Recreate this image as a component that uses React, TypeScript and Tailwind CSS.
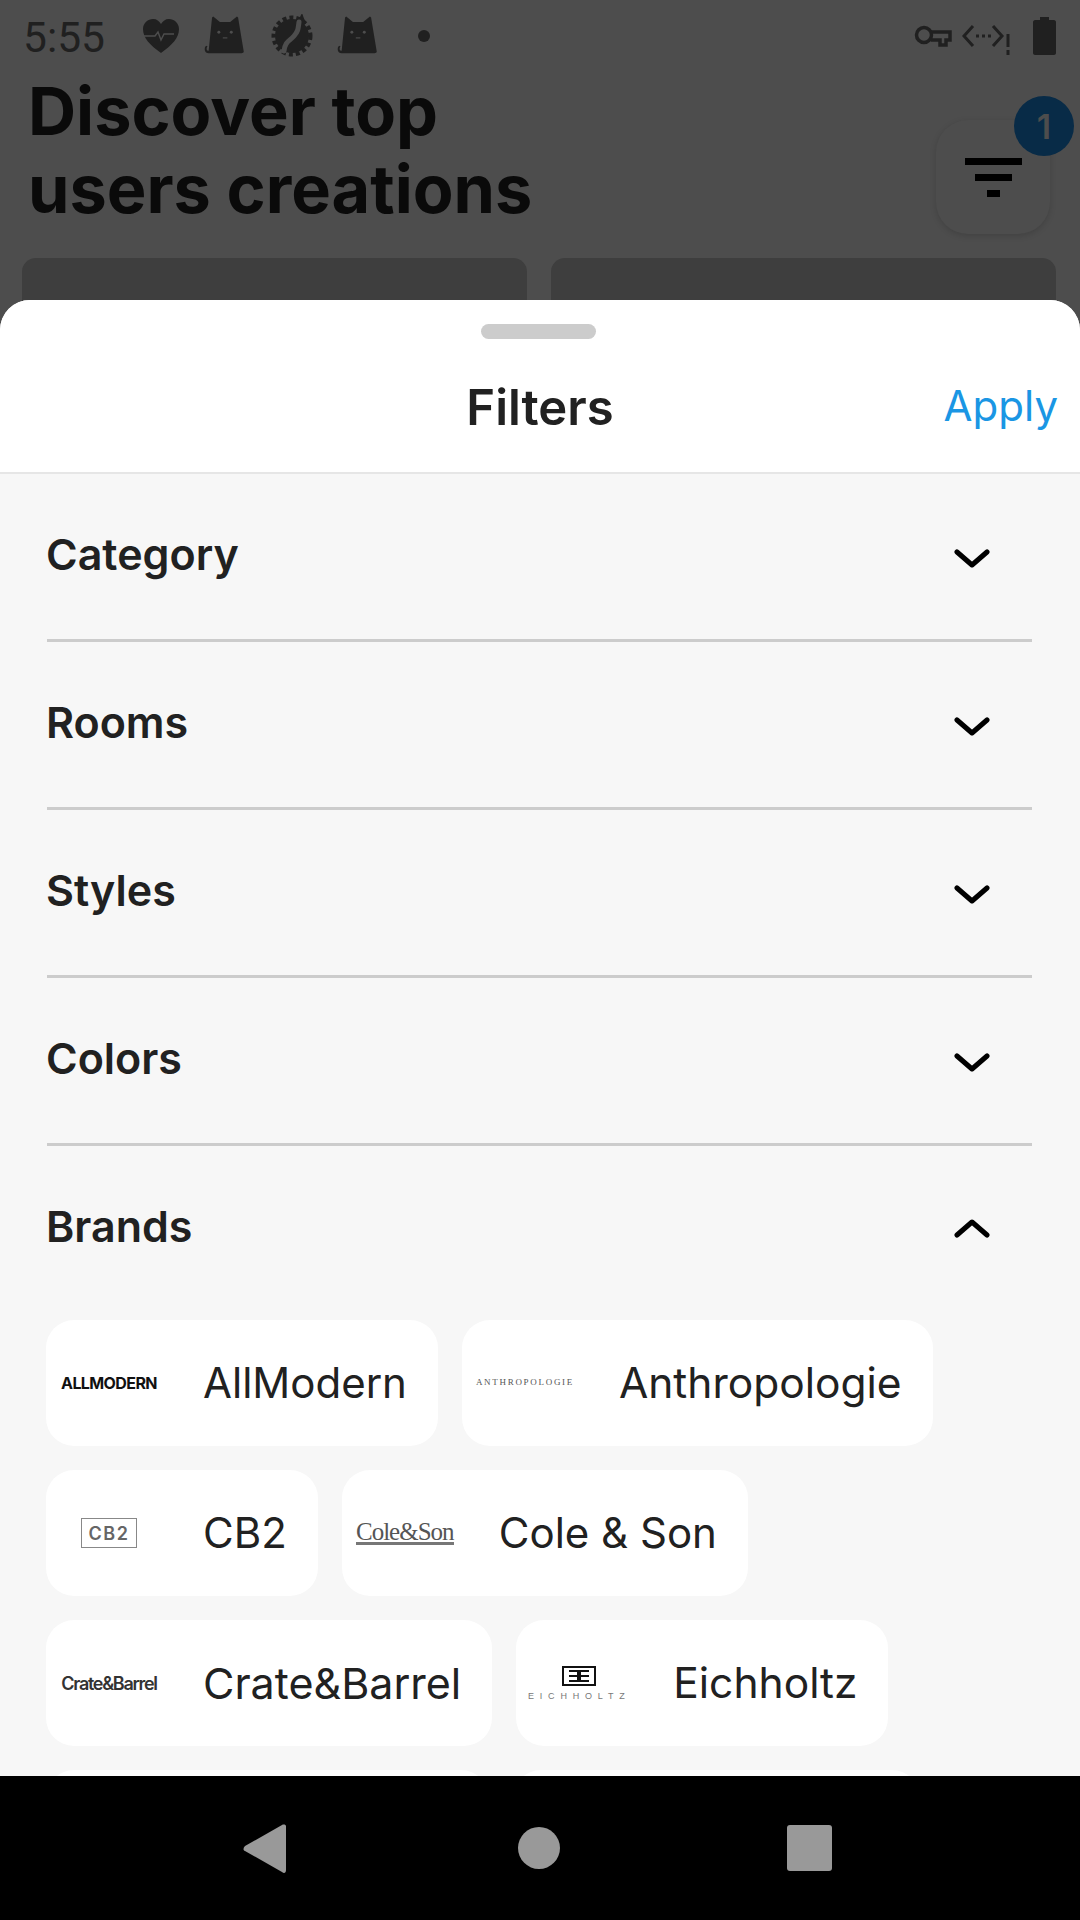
import type { ReactNode } from "react";

function Cat() {
  return (
    <svg viewBox="0 0 38 38" className="h-[43px] w-[43px] fill-[#202020]">
      <path d="M9 3l6 5h9l6-5 1 1 5 30c0 1-1 1.500-2 1.500H5c-2 0-3.500-1-3.500-3.500 0-1.500.5-2.500 1.500-3l1 .6c-.6.5-.8 1.300-.8 2.200 0 1 .7 1.600 1.800 1.600L8 4z" />
      <circle cx="14" cy="17" r="1.300" fill="#4d4d4d" />
      <circle cx="25" cy="17" r="1.300" fill="#4d4d4d" />
      <path d="M17.500 22h4" stroke="#4d4d4d" strokeWidth="1" />
    </svg>
  );
}

function Gear() {
  return (
    <svg viewBox="8 8 44 44" className="h-[44px] w-[44px]">
      <circle cx="30" cy="30" r="17" fill="#202020" />
      <circle cx="30" cy="30" r="18.500" fill="none" stroke="#202020" strokeWidth="4" strokeDasharray="4 3" />
      <path d="M35 17l5-10 4 11z" fill="#202020" />
      <path d="M22 45C23 35 28 35 32 30S36 24 37 16" fill="none" stroke="#4d4d4d" strokeWidth="5" strokeLinecap="round" />
    </svg>
  );
}

function StatusBar() {
  return (
    <div className="flex h-[72px] items-center justify-between pl-[23px] pr-[24px]">
      <div className="flex items-center">
        <span className="mt-[4px] w-[117px] font-['Roboto',sans-serif] text-[42.500px] leading-none text-[#202020]">5:55</span>
        <svg viewBox="0 0 42 36" className="h-[36px] w-[42px]">
          <path d="M21 35C10 27 3 20 3 11 3 5 8 1 13 1c4 0 6 2 8 5 2-3 4-5 8-5 5 0 10 4 10 10 0 9-7 16-18 24z" fill="#202020" />
          <path d="M0 18h15l3-4 3 8 3-6h10" fill="none" stroke="#4d4d4d" strokeWidth="1.500" />
        </svg>
        <div className="-mt-[3px] ml-[21px]"><Cat /></div>
        <div className="ml-[24px]"><Gear /></div>
        <div className="-mt-[3px] ml-[22px]"><Cat /></div>
        <div className="ml-[39px] h-[12px] w-[12px] rounded-full bg-[#202020]" />
      </div>
      <div className="flex items-center">
        <svg viewBox="0 0 38 24" className="h-[24px] w-[38px]" fill="none" stroke="#202020" strokeWidth="3.500">
          <circle cx="10" cy="11" r="7.500" />
          <path d="M17 8h19v8h-4v5h-6v-5h-9" />
        </svg>
        <svg viewBox="0 0 50 34" className="ml-[10px] mt-[8px] h-[34px] w-[50px]" fill="none" stroke="#202020" strokeWidth="3">
          <path d="M11 3L2 13l9 10M31 3l9 10-9 10" />
          <path d="M14 13h3M20 13h3M26 13h3" />
          <path d="M46 11v13M46 27v5" />
        </svg>
        <svg viewBox="0 0 23 38" className="ml-[21px] h-[38px] w-[23px] fill-[#202020]">
          <path d="M7 0h9v3h5c1 0 2 1 2 2v31c0 1-1 2-2 2H2c-1 0-2-1-2-2V5c0-1 1-2 2-2h5z" />
        </svg>
      </div>
    </div>
  );
}

function Backdrop() {
  return (
    <div className="h-[1776px] overflow-hidden bg-[#4d4d4d]">
      <StatusBar />
      <div className="relative">
        <h1 className="pl-[28px] text-[66.600px] font-bold leading-[78px] text-[#0a0a0a]">
          Discover top
          <br />
          users creations
        </h1>
        <div className="absolute right-[30px] top-[48px] flex h-[114px] w-[114px] flex-col items-center justify-center gap-[9px] rounded-[32px] bg-[#4d4d4d] shadow-[0_2px_6px_rgba(0,0,0,0.15)]">
          <div className="h-[7px] w-[57px] bg-black" />
          <div className="h-[7px] w-[37px] bg-black" />
          <div className="h-[7px] w-[13px] bg-black" />
        </div>
        <div className="absolute right-[6px] top-[24px] flex h-[60px] w-[60px] items-center justify-center rounded-full bg-[#082b47] text-[34px] font-semibold text-[#4d4d4d]">
          1
        </div>
      </div>
      <div className="mt-[30px] grid grid-cols-2 gap-[24px] pl-[22px] pr-[24px]">
        <div className="h-[200px] rounded-[14px] bg-[#3e3e3e]" />
        <div className="h-[200px] rounded-[14px] bg-[#3e3e3e]" />
      </div>
    </div>
  );
}

function Chevron({ up }: { up?: boolean }) {
  return (
    <svg
      viewBox="0 0 36 20"
      className={up ? "mr-[42px] -mt-[3px] h-[20px] w-[36px]" : "mr-[42px] mt-[5px] h-[20px] w-[36px]"}
      fill="none"
      stroke="#000000"
      strokeWidth="5"
      strokeLinecap="round"
      strokeLinejoin="round"
    >
      <path d={up ? "M3 17L18 4l15 13" : "M3 3l15 13L33 3"} />
    </svg>
  );
}

function FilterRow({ label, open }: { label: string; open?: boolean }) {
  return (
    <div className={open ? "mb-[8px] flex h-[166px] items-center justify-between" : "flex h-[168px] items-center justify-between border-b-[3px] border-[#cccccc]"}>
      <span className="-ml-[1px] mb-[5px] text-[43px] font-semibold text-[#212121]">{label}</span>
      <Chevron up={open} />
    </div>
  );
}

function BrandChip({ logo, name, size }: { logo: ReactNode; name: string; size: string }) {
  return (
    <div className="flex h-[126px] items-center rounded-[28px] bg-white pl-[14px] pr-[31px]">
      <div className="flex w-[98px] shrink-0 flex-col items-center justify-center">{logo}</div>
      <span className={"ml-[45px] whitespace-nowrap leading-none text-[#212121] " + size}>{name}</span>
    </div>
  );
}

const brands = [
  {
    name: "AllModern",
    size: "text-[42px]",
    logo: <span className="whitespace-nowrap text-[16px] font-bold tracking-[-0.600px] text-[#111]">ALLMODERN</span>,
  },
  {
    name: "Anthropologie",
    size: "text-[42.500px]",
    logo: <span className="whitespace-nowrap font-['Liberation_Serif',serif] text-[9px] tracking-[1.700px] text-[#555]">ANTHROPOLOGIE</span>,
  },
  {
    name: "CB2",
    size: "text-[42px]",
    logo: (
      <span className="flex h-[30px] w-[56px] items-center justify-center border border-[#888] text-[18px] font-semibold tracking-[1.500px] text-[#666]">
        CB2
      </span>
    ),
  },
  {
    name: "Cole & Son",
    size: "text-[42px]",
    logo: (
      <span className="whitespace-nowrap border-b-[3px] border-[#777] font-['Liberation_Serif',serif] text-[25px] leading-[21px] tracking-[-1px] text-[#555]">
        Cole&amp;Son
      </span>
    ),
  },
  {
    name: "Crate&Barrel",
    size: "text-[43px]",
    logo: <span className="whitespace-nowrap text-[18px] font-semibold tracking-[-1.300px] text-[#333]">Crate&amp;Barrel</span>,
  },
  {
    name: "Eichholtz",
    size: "text-[42.500px]",
    logo: (
      <>
        <svg viewBox="0 0 34 20" className="h-[20px] w-[34px]" fill="none" stroke="#111" strokeWidth="2">
          <rect x="1" y="1" width="32" height="18" />
          <path d="M7 5h9v10H7M7 10h20M27 5h-9v10h9" />
        </svg>
        <span className="mt-[5px] whitespace-nowrap font-['Liberation_Sans',sans-serif] text-[9px] leading-[10px] tracking-[5.800px] text-[#777]">EICHHOLTZ</span>
      </>
    ),
  },
];

function FilterSheet() {
  return (
    <div className="absolute inset-x-0 bottom-[144px] top-[300px] overflow-hidden rounded-t-[30px] bg-[#f7f7f7]">
      <div className="relative flex h-[174px] items-center justify-center border-b-[2px] border-[#e6e6e6] bg-white">
        <div className="absolute left-[481px] top-[24px] h-[15px] w-[115px] rounded-full bg-[#cccccc]" />
        <span className="mt-[43px] text-[49px] font-semibold text-[#212121]">Filters</span>
        <span className="absolute right-[22px] top-[74px] text-[42px] text-[#1a96e4]">Apply</span>
      </div>
      <div className="pl-[47px] pr-[48px]">
        <FilterRow label="Category" />
        <FilterRow label="Rooms" />
        <FilterRow label="Styles" />
        <FilterRow label="Colors" />
        <FilterRow label="Brands" open />
      </div>
      <div className="flex flex-wrap gap-[24px] pl-[46px] pr-[40px]">
        {brands.map((b) => (
          <BrandChip key={b.name} logo={b.logo} name={b.name} size={b.size} />
        ))}
        {/* next row is cut off by the nav bar */}
        <div className="h-[126px] w-[443px] rounded-[28px] bg-white" />
        <div className="h-[126px] w-[407px] rounded-[28px] bg-white" />
      </div>
    </div>
  );
}

function NavBar() {
  return (
    <div className="flex h-[144px] items-center bg-black">
      <svg viewBox="0 0 1080 144" className="h-[144px] w-[1080px] fill-[#999999]">
        <path d="M286 50v44c0 3-2 4-4 2l-37-21c-2-1-2-3 0-5l37-21c2-1 4 0 4 1z" />
        <circle cx="539" cy="72" r="21" />
        <rect x="787" y="49" width="45" height="46" rx="3" />
      </svg>
    </div>
  );
}

export default function App() {
  return (
    <div className="relative h-[1920px] w-[1080px] overflow-hidden font-['Inter',sans-serif]">
      <Backdrop />
      <FilterSheet />
      <NavBar />
    </div>
  );
}
